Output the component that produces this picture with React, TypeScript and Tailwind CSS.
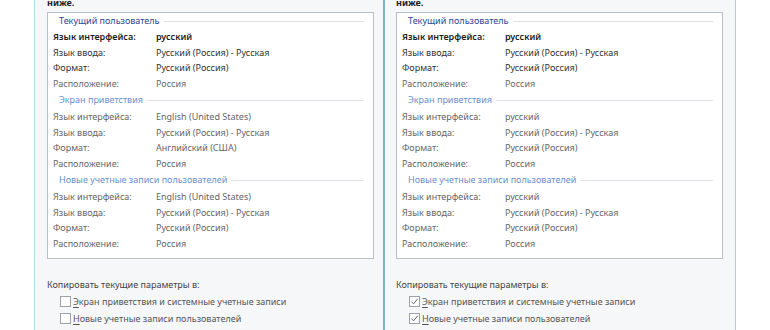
import React from 'react'

type Row = { label: string; value: string }

interface Section {
    title: string
    primary?: boolean
    rows: Row[]
}

const rowsRu = (ui: string, fmt: string): Row[] => [
    { label: 'Язык интерфейса:', value: ui },
    { label: 'Язык ввода:', value: 'Русский (Россия) - Русская' },
    { label: 'Формат:', value: fmt },
    { label: 'Расположение:', value: 'Россия' },
]

const leftSections: Section[] = [
    { title: 'Текущий пользователь', primary: true, rows: rowsRu('русский', 'Русский (Россия)') },
    { title: 'Экран приветствия', rows: rowsRu('English (United States)', 'Английский (США)') },
    { title: 'Новые учетные записи пользователей', rows: rowsRu('English (United States)', 'Русский (Россия)') },
]

const rightSections: Section[] = [
    { title: 'Текущий пользователь', primary: true, rows: rowsRu('русский', 'Русский (Россия)') },
    { title: 'Экран приветствия', rows: rowsRu('русский', 'Русский (Россия)') },
    { title: 'Новые учетные записи пользователей', rows: rowsRu('русский', 'Русский (Россия)') },
]

function SectionBlock({ section, first }: { section: Section; first: boolean }) {
    return (
        <div>
            <div className={`flex items-center pl-[11px] pr-[9px] ${first ? 'h-[16px]' : 'h-[18px]'}`}>
                <span className={section.primary ? 'text-[#2b4796]' : 'text-[#6b8fcc]'}>{section.title}</span>
                <div className="ml-1 h-px flex-1 bg-[#dfe3e8]" />
            </div>
            {section.rows.map((row, i) => {
                let tone = 'text-[#666]'
                if (section.primary) {
                    if (i === 0) tone = 'text-[#1c1c1c] font-semibold'
                    else if (i === 3) tone = 'text-[#6a6a6a]'
                    else tone = 'text-[#333]'
                }
                return (
                    <div key={i} className={`flex h-[15.5px] items-center pl-[5px] ${tone}`}>
                        <span className="w-[103px] shrink-0">{row.label}</span>
                        <span>{row.value}</span>
                    </div>
                )
            })}
        </div>
    )
}

function Checkbox({ checked }: { checked: boolean }) {
    return (
        <span className="flex h-[11px] w-[11px] shrink-0 items-center justify-center border border-[#9aa3ab] bg-white">
            {checked && (
                <svg viewBox="0 0 10 10" className="h-[9px] w-[9px]">
                    <path d="M1.5 5 L4 7.5 L8.5 2" fill="none" stroke="#5a6068" strokeWidth="1.1" />
                </svg>
            )}
        </span>
    )
}

function Option({ checked, accel, rest }: { checked: boolean; accel: string; rest: string }) {
    return (
        <div className="flex h-[17px] items-center gap-[2px] pl-[13px] text-[#555]">
            <Checkbox checked={checked} />
            <span>
                <span className="underline underline-offset-2">{accel}</span>
                {rest}
            </span>
        </div>
    )
}

function Window({ sections, checked, className }: { sections: Section[]; checked: boolean; className: string }) {
    return (
        <div className={`flex h-full w-[351px] flex-col bg-[#f6f7f8] ${className}`}>
            <div className="-mt-[4px] h-[16px] font-bold text-[#222]">ниже.</div>
            <div className="w-[327px] border border-[#b8bfc6] bg-white pb-[7px]">
                {sections.map((s, i) => (
                    <SectionBlock key={s.title} section={s} first={i === 0} />
                ))}
            </div>
            <div className="mt-[18px] flex h-[16px] items-center text-[#444]">Копировать текущие параметры в:</div>
            <Option checked={checked} accel="Э" rest="кран приветствия и системные учетные записи" />
            <Option checked={checked} accel="Н" rest="овые учетные записи пользователей" />
        </div>
    )
}

export default function App() {
    return (
        <div
            className="flex h-[330px] w-[770px] overflow-hidden bg-white text-[9px]"
            style={{ fontFamily: '"Noto Sans", "Open Sans", sans-serif' }}
        >
            <div className="w-[34px] shrink-0" />
            <Window
                sections={leftSections}
                checked={false}
                className="border-l border-r-2 border-l-[#b7dbe1] border-r-[#79b3bf] pl-[12px]"
            />
            <Window sections={rightSections} checked={true} className="border-r border-r-[#a9d2da] pl-[11px]" />
        </div>
    )
}
